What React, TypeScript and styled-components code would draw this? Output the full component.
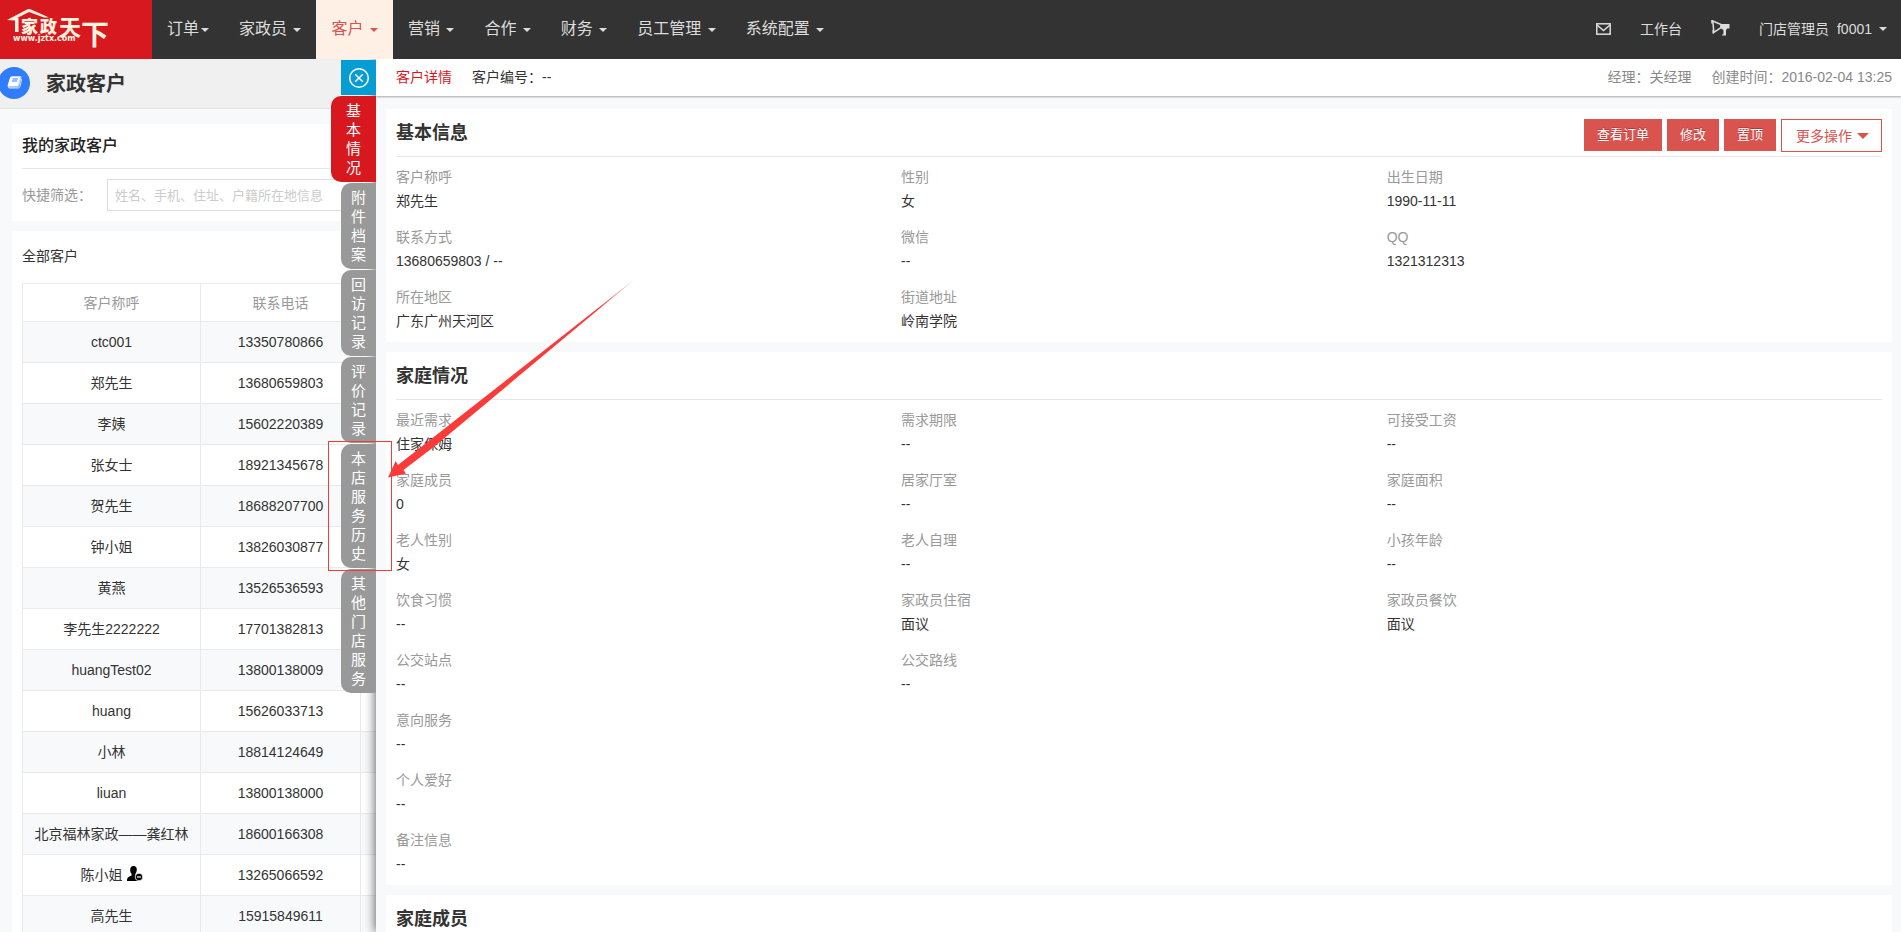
import React from 'react';
import styled, { createGlobalStyle } from 'styled-components';

const GlobalStyle = createGlobalStyle`
  * { box-sizing: border-box; }
  html, body, #root { height: 100%; }
  body {
    margin: 0;
    overflow: hidden;
    background: #f8f9fb;
    color: #333;
    font: 14px/24px "Liberation Sans", Arial, "Noto Sans CJK SC", sans-serif;
  }
  h1, h2, p, dl, dd, dt { margin: 0; }
  button, input { font: inherit; }
  a { color: inherit; text-decoration: none; }
`;

const Page = styled.div`
  position: relative;
  height: 100%;
  overflow: hidden;
  display: flex;
  flex-direction: column;
`;

/* ---------- top bar ---------- */

const TopBar = styled.header`
  flex: none;
  display: flex;
  height: 59px;
  background: #333;
`;

const Brand = styled.a`
  flex: none;
  width: 152px;
  background: #d7191f;
`;

const MainNav = styled.nav`
  display: flex;
  flex: 1;
`;

const NavItem = styled.a<{ $active?: boolean }>`
  display: block;
  padding: 0 15px;
  font-size: 16px;
  line-height: 57px;
  white-space: nowrap;
  color: ${p => (p.$active ? '#d9534f' : '#ddd')};
  background: ${p => (p.$active ? '#fff0e6' : 'transparent')};
`;

const Caret = styled.span`
  display: inline-block;
  margin-left: 2px;
  vertical-align: middle;
  border: 4px solid transparent;
  border-top-color: currentColor;
  border-bottom: 0;
`;

const UserNav = styled.nav`
  display: flex;
  align-items: center;
  gap: 29px;
  padding: 0 14px 2px 0;
  color: #ddd;
  white-space: nowrap;
  a { display: flex; align-items: center; }
`;

const UserLink = styled.a`
  gap: 8px;
  ${Caret} { margin-left: -1px; }
`;

/* ---------- page behind the drawer ---------- */

const Backdrop = styled.main`
  flex: 1;
  min-height: 0;
  overflow: hidden;
`;

const TitleBar = styled.div`
  display: flex;
  align-items: center;
  gap: 16px;
  height: 50px;
  padding-bottom: 2px;
  background: #f0f0f0;
  border-bottom: 1px solid #e4e4e4;
  h1 { padding-top: 2px; font-size: 20px; }
`;

const RoundBadge = styled.span`
  display: flex;
  align-items: center;
  justify-content: center;
  width: 32px;
  height: 32px;
  margin-left: -2px;
  border-radius: 50%;
  background: #2f7dfb;
`;

const ListCard = styled.section`
  margin: 0 12px 10px;
  padding: 0 10px 10px;
  background: #fff;
`;

const ListArea = styled.div`
  padding-top: 15px;
`;

const ListTitle = styled.h2`
  height: 45px;
  border-bottom: 1px solid #e8e8e8;
  font-size: 16px;
  font-weight: 500;
  line-height: 44px;
  color: #222;
`;

const FilterRow = styled.div`
  display: flex;
  align-items: center;
  gap: 15px;
  padding-top: 10px;
  label { color: #999; line-height: 32px; }
`;

const FilterInput = styled.input`
  width: 260px;
  height: 32px;
  padding: 0 7px;
  border: 1px solid #ddd;
  font-size: 13px;
  &::placeholder { color: #ccc; opacity: 1; }
`;

const TableTitle = styled.p`
  height: 52px;
  line-height: 50px;
`;

const Customers = styled.table`
  width: 100%;
  border-collapse: collapse;
  table-layout: fixed;
  text-align: center;
  th, td { padding: 0; border: 1px solid #e8eaec; }
  th { height: 38px; font-weight: 400; color: #999; }
  td { height: 41px; }
  tbody tr:nth-child(odd) { background: #f8f9fb; }
  svg { margin-left: 4px; vertical-align: -1px; }
`;

/* ---------- drawer ---------- */

const Drawer = styled.aside`
  position: absolute;
  top: 59px;
  right: 0;
  bottom: 0;
  left: 376px;
  background: #f8f9fb;
  box-shadow: -1px 0 10px rgba(0, 0, 0, 0.6);
  clip-path: inset(0 0 0 -60px);
`;

const TabRail = styled.nav`
  position: absolute;
  top: 1px;
  right: 100%;
  display: flex;
  flex-direction: column;
  align-items: flex-end;
  gap: 1px;
`;

const CloseButton = styled.button`
  display: flex;
  align-items: center;
  justify-content: center;
  width: 35px;
  height: 35px;
  padding: 0;
  border: 0;
  background: #069dd2;
`;

const RailTab = styled.button<{ $active?: boolean }>`
  width: ${p => (p.$active ? 45 : 35)}px;
  padding: 5px 0 5px ${p => (p.$active ? 15 : 10)}px;
  border: 0;
  border-radius: 10px 0 0 10px;
  background: ${p => (p.$active ? '#d7191f' : '#999')};
  color: #fff;
  text-align: left;
  font-size: 15px;
  line-height: 19px;
  span { display: block; width: 15px; word-break: break-all; }
`;

const DrawerBody = styled.div`
  position: relative;
  height: 100%;
  overflow: hidden;
  background: #f8f9fb;
`;

const DrawerHead = styled.div`
  display: flex;
  align-items: center;
  gap: 20px;
  height: 37px;
  padding: 0 9px 2px 20px;
  background: #fff;
  box-shadow: 0 1px 2px #aaa4a6;
  strong { font-weight: 400; color: #d7191f; }
`;

const HeadMeta = styled.div`
  display: flex;
  gap: 20px;
  margin-left: auto;
  color: #888;
`;

const Cards = styled.div`
  display: flex;
  flex-direction: column;
  gap: 10px;
  padding: 13px 9px 0 10px;
`;

const Card = styled.section`
  padding: 0 10px 9px;
  background: #fff;
`;

const CardHead = styled.div`
  display: flex;
  align-items: flex-start;
  justify-content: space-between;
  height: 48px;
  padding-top: 10px;
  border-bottom: 1px solid #e8e8e8;
  h2 { font-size: 18px; line-height: 28px; }
`;

const Actions = styled.div`
  display: flex;
  align-items: flex-start;
  gap: 5px;
`;

const SolidButton = styled.button`
  height: 32px;
  padding: 0 13px;
  border: 0;
  background: #d9534f;
  color: #fff;
  font-size: 13px;
  text-shadow: 0 -1px 0 rgba(0, 0, 0, 0.25);
`;

const MoreButton = styled.button`
  display: flex;
  align-items: center;
  gap: 5px;
  height: 33px;
  padding: 0 12px 0 14px;
  border: 1px solid #d9534f;
  background: #fff;
  color: #d9534f;
`;

const Triangle = styled.span`
  border: 6px solid transparent;
  border-top-color: currentColor;
  border-bottom: 0;
`;

const Fields = styled.dl`
  display: grid;
  grid-template-columns: 52fr 50fr 51fr;
  row-gap: 12px;
  padding-top: 8px;
  dt { color: #999; }
`;

const Field = styled.div<{ $first?: boolean }>`
  grid-column: ${p => (p.$first ? '1' : 'auto')};
`;

/* ---------- annotation over the page ---------- */

const Marker = styled.div`
  position: absolute;
  top: 441px;
  left: 328px;
  width: 64px;
  height: 130px;
  border: 1px solid #f43b3b;
`;

const Arrow = styled.svg`
  position: absolute;
  top: 270px;
  left: 380px;
  width: 270px;
  height: 220px;
`;

const navItems = ['订单', '家政员 ', '客户 ', '营销 ', '合作 ', '财务 ', '员工管理 ', '系统配置 '];

const customers: [string, string][] = [
  ['ctc001', '13350780866'],
  ['郑先生', '13680659803'],
  ['李姨', '15602220389'],
  ['张女士', '18921345678'],
  ['贺先生', '18688207700'],
  ['钟小姐', '13826030877'],
  ['黄燕', '13526536593'],
  ['李先生2222222', '17701382813'],
  ['huangTest02', '13800138009'],
  ['huang', '15626033713'],
  ['小林', '18814124649'],
  ['liuan', '13800138000'],
  ['北京福林家政——龚红林', '18600166308'],
  ['陈小姐', '13265066592'],
  ['高先生', '15915849611'],
];

const railTabs = ['基本情况', '附件档案', '回访记录', '评价记录', '本店服务历史', '其他门店服务'];

const basicRows: [string, string][][] = [
  [['客户称呼', '郑先生'], ['性别', '女'], ['出生日期', '1990-11-11']],
  [['联系方式', '13680659803 / --'], ['微信', '--'], ['QQ', '1321312313']],
  [['所在地区', '广东广州天河区'], ['街道地址', '岭南学院']],
];

const familyRows: [string, string][][] = [
  [['最近需求', '住家保姆'], ['需求期限', '--'], ['可接受工资', '--']],
  [['家庭成员', '0'], ['居家厅室', '--'], ['家庭面积', '--']],
  [['老人性别', '女'], ['老人自理', '--'], ['小孩年龄', '--']],
  [['饮食习惯', '--'], ['家政员住宿', '面议'], ['家政员餐饮', '面议']],
  [['公交站点', '--'], ['公交路线', '--']],
  [['意向服务', '--']],
  [['个人爱好', '--']],
  [['备注信息', '--']],
];

const Logo = () => (
  <svg width="152" height="59" viewBox="0 0 152 59" fill="#fff3e0" role="img" aria-label="家政天下">
    <path d="M7 20 L27 9.5 Q29 8.5 31 9.5 L49 17.5 H44 L29 12 L17 18 H18.5 V32 H15 V20.5 Z" />
    <g fontFamily="Noto Sans CJK SC, sans-serif">
      <text x="21 40" y="33" fontSize="17" fontWeight="900">家政</text>
      <text x="59" y="35" fontSize="22" fontWeight="700">天</text>
      <text x="81" y="45" fontSize="28" fontWeight="700">下</text>
    </g>
    <text x="13" y="41" fontSize="8" fontWeight="700" fontFamily="DejaVu Sans, sans-serif">www.jztx.com</text>
  </svg>
);

const EnvelopeIcon = () => (
  <svg width="15" height="12" viewBox="0 0 15 12" fill="none" stroke="currentColor" strokeWidth="1.5">
    <rect x="0.8" y="0.8" width="13.4" height="10.4" />
    <path d="M1 2 L7.5 7.5 L14 2" />
  </svg>
);

const MegaphoneIcon = () => (
  <svg width="19" height="17" viewBox="0 0 19 17" fill="none" stroke="currentColor">
    <path d="M1.8 1 L10 4.6 V7.6 L2.8 12.4 Z" strokeWidth="1.5" />
    <path d="M9.5 4 H18.5 V8.6 H16.2 Q14.8 9.4 15 11.5 V15.6 H11 V14.4 H12.4 V10 L9.5 8 Z" fill="currentColor" stroke="none" />
    <path d="M1 0 V3.6 M2.2 10 V13.6" strokeWidth="1.6" />
  </svg>
);

const BookIcon = () => (
  <svg width="15" height="13" viewBox="0 0 15 13">
    <path d="M4.5 0 H13 Q14.3 0.2 14 1.5 L11.6 10 Q11.2 11 10 11 H2 L1.8 12 H11.2 Q12.4 12 12.8 10.8 L14.8 3" fill="none" stroke="#fff" strokeWidth="0.8" />
    <path d="M4.6 0.4 H12.4 Q13.6 0.6 13.3 1.8 L11.2 9.4 Q10.9 10.2 10 10.2 H2.4 Q1 10.4 1.4 11.4 Q0.2 10.6 0.7 9.2 L3 1.6 Q3.4 0.4 4.6 0.4 Z" fill="#fff" />
    <path d="M5.6 3 H10.8 M5 5 H10.2" stroke="#2f7dfb" strokeWidth="1" />
  </svg>
);

const UserMinusIcon = () => (
  <svg width="16" height="15" viewBox="0 0 16 15">
    <path d="M6.5 0 C9 0 10 1.8 9.8 4 C9.7 6 9 7 8.4 7.8 V9.4 C9.5 10 11.5 10.3 12 12 V15 H0 C0 12 1 11 4.6 9.6 V7.8 C3.8 7 3.2 6 3.2 4 C3 1.8 4.2 0 6.5 0 Z" />
    <circle cx="12" cy="11" r="3.8" stroke="#fff" strokeWidth="0.8" />
    <path d="M10 11 H14" stroke="#fff" strokeWidth="1.2" />
  </svg>
);

const CloseIcon = () => (
  <svg width="22" height="22" viewBox="0 0 22 22" fill="none" stroke="#fff" strokeWidth="1.5">
    <circle cx="11" cy="11" r="9.3" />
    <path d="M7.2 7.2 L14.8 14.8 M14.8 7.2 L7.2 14.8" />
  </svg>
);

const FieldGrid = ({ rows }: { rows: [string, string][][] }) => (
  <Fields>
    {rows.map(row =>
      row.map(([label, value], i) => (
        <Field key={label} $first={i === 0}>
          <dt>{label}</dt>
          <dd>{value}</dd>
        </Field>
      )),
    )}
  </Fields>
);

export default function App() {
  return (
    <Page>
      <GlobalStyle />
      <TopBar>
        <Brand href="#"><Logo /></Brand>
        <MainNav>
          {navItems.map((item, i) => (
            <NavItem key={item} href="#" $active={i === 2}>
              {item}<Caret />
            </NavItem>
          ))}
        </MainNav>
        <UserNav>
          <a href="#" aria-label="消息"><EnvelopeIcon /></a>
          <a href="#">工作台</a>
          <a href="#" aria-label="公告"><MegaphoneIcon /></a>
          <UserLink href="#"><span>门店管理员</span><span>f0001</span><Caret /></UserLink>
        </UserNav>
      </TopBar>

      <Backdrop>
        <TitleBar>
          <RoundBadge><BookIcon /></RoundBadge>
          <h1>家政客户</h1>
        </TitleBar>
        <ListArea>
          <ListCard>
            <ListTitle>我的家政客户</ListTitle>
            <FilterRow>
              <label htmlFor="quick-filter">快捷筛选：</label>
              <FilterInput id="quick-filter" placeholder="姓名、手机、住址、户籍所在地信息" />
            </FilterRow>
          </ListCard>
          <ListCard>
            <TableTitle>全部客户</TableTitle>
            <Customers>
              <colgroup>
                <col width="178" />
                <col width="160" />
                <col />
              </colgroup>
              <thead>
                <tr><th>客户称呼</th><th>联系电话</th><th /></tr>
              </thead>
              <tbody>
                {customers.map(([name, phone]) => (
                  <tr key={name}>
                    <td>{name}{name === '陈小姐' && <UserMinusIcon />}</td>
                    <td>{phone}</td>
                    <td />
                  </tr>
                ))}
              </tbody>
            </Customers>
          </ListCard>
        </ListArea>
      </Backdrop>

      <Drawer>
        <TabRail>
          <CloseButton aria-label="关闭"><CloseIcon /></CloseButton>
          {railTabs.map((tab, i) => (
            <RailTab key={tab} $active={i === 0}><span>{tab}</span></RailTab>
          ))}
        </TabRail>
        <DrawerBody>
          <DrawerHead>
            <strong>客户详情</strong>
            <span>客户编号：--</span>
            <HeadMeta>
              <span>经理：关经理</span>
              <span>创建时间：2016-02-04 13:25</span>
            </HeadMeta>
          </DrawerHead>
          <Cards>
            <Card>
              <CardHead>
                <h2>基本信息</h2>
                <Actions>
                  <SolidButton>查看订单</SolidButton>
                  <SolidButton>修改</SolidButton>
                  <SolidButton>置顶</SolidButton>
                  <MoreButton>更多操作<Triangle /></MoreButton>
                </Actions>
              </CardHead>
              <FieldGrid rows={basicRows} />
            </Card>
            <Card>
              <CardHead><h2>家庭情况</h2></CardHead>
              <FieldGrid rows={familyRows} />
            </Card>
            <Card>
              <CardHead><h2>家庭成员</h2></CardHead>
            </Card>
          </Cards>
        </DrawerBody>
      </Drawer>

      <Marker />
      <Arrow viewBox="0 0 270 220" aria-hidden="true">
        <defs>
          <linearGradient id="tail" x1="0" y1="1" x2="1" y2="0">
            <stop offset="0.85" stopColor="#fb3a3a" />
            <stop offset="1" stopColor="#fb3a3a" stopOpacity="0.4" />
          </linearGradient>
        </defs>
        <path d="M8 207.5 L15.7 191 L18 195 L50 170 L255 9 L55 176 L23.5 200 L26 203.5 Z" fill="url(#tail)" />
      </Arrow>
    </Page>
  );
}
